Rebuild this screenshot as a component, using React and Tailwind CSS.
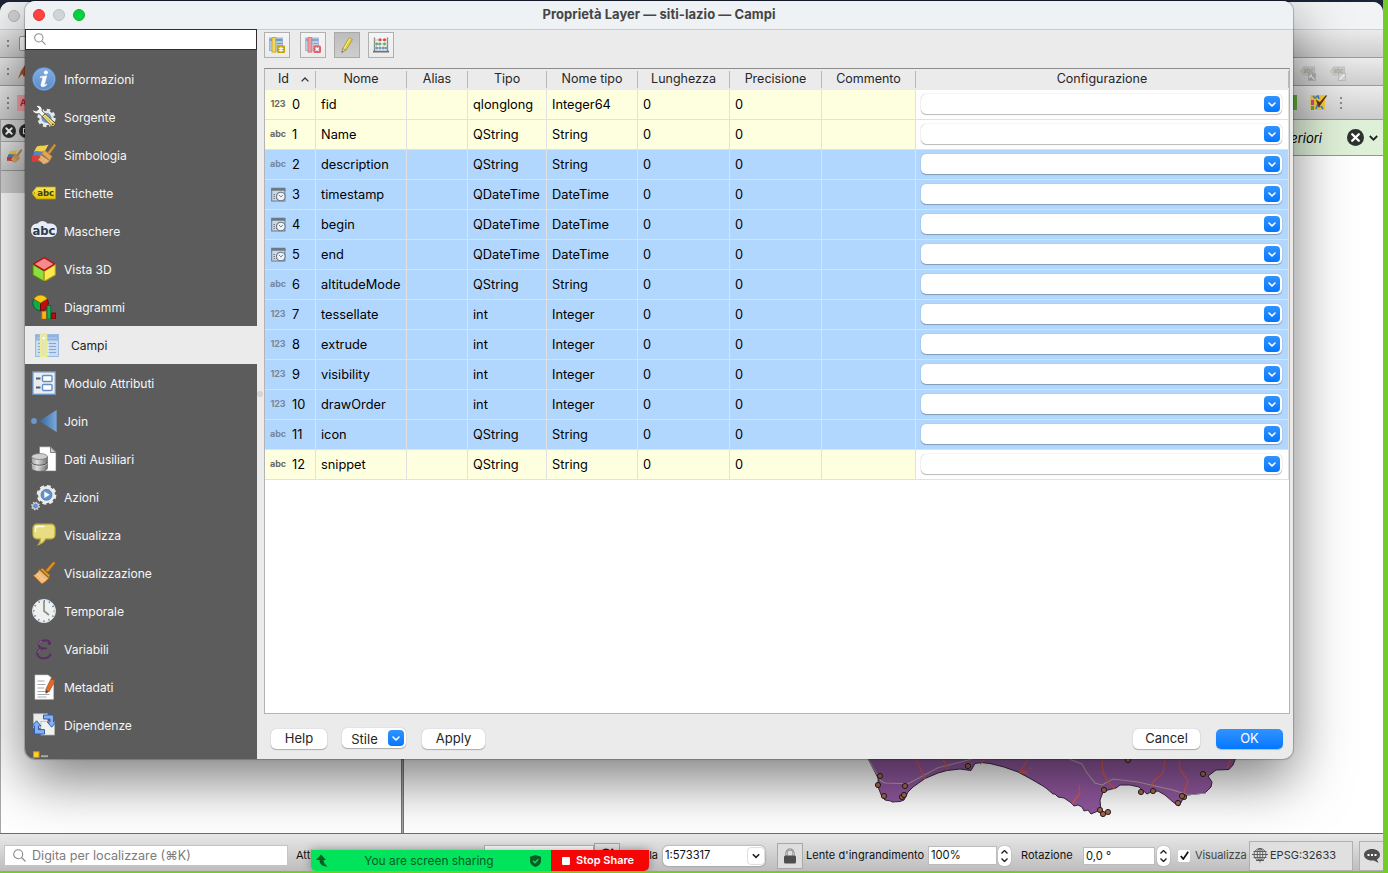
import React from 'react';

/* ---------- sidebar icons (24 x 24) ---------- */

const Svg = ({ s = 24, vb = '0 0 24 24', className = '', children }) => (
  <svg width={s} height={s} viewBox={vb} className={'shrink-0 ' + className} fill="none">
    {children}
  </svg>
);

const InfoIcon = () => (
  <Svg>
    <defs>
      <linearGradient id="inf" x1="0" y1="0" x2="0" y2="1">
        <stop offset="0" stopColor="#83ace0" />
        <stop offset="1" stopColor="#5b8ecb" />
      </linearGradient>
    </defs>
    <circle cx="12" cy="12" r="11.700" fill="#5f92cf" />
    <circle cx="12" cy="12" r="10.600" fill="url(#inf)" stroke="#8fb5e5" strokeWidth=".6" />
    <circle cx="13.900" cy="5.500" r="2" fill="#fff" />
    <path d="M8.300 9.700l6.500-.9-2.300 8.500c-.2.900.5.8 1.800-.3l.6.600c-2 2.700-6.800 3.300-5.800-.4l1.500-5.600c.2-.9-.2-1-2.500-1z" fill="#fff" stroke="#fff" strokeWidth=".5" />
  </Svg>
);

const WrenchGearIcon = () => (
  <Svg>
    <circle cx="14.500" cy="13" r="7.600" stroke="#e6e8ea" strokeWidth="3.200" strokeDasharray="3.400 2.570" />
    <circle cx="14.500" cy="13" r="6.200" fill="#6a9bd1" stroke="#e6e8ea" strokeWidth="2.200" />
    <path d="M3.800.8C7.500-.6 11 2 10 6l4.600 4-3 3.200L7.300 8.600C4 9.600 1 8 .2 4.600l4 1.400L6.800 4z" fill="#f4f4f4" stroke="#4a4a4a" strokeWidth=".8" />
    <path d="M10.200 11.500l3-2.700 10 9.400c.6 1.200-1.600 4-3 3.600z" fill="#f3df7e" stroke="#4f4526" strokeWidth=".9" />
    <path d="M12.800 11.300l8 8" stroke="#b79a35" strokeWidth=".8" />
    <circle cx="20.800" cy="19.500" r=".9" fill="#4f4526" />
  </Svg>
);

const SymbologyIcon = ({ s = 24 }) => (
  <Svg s={s}>
    <path d="M4.500 4c3-2.500 6-.2 12-2.500l-4.500 8.500-10-1z" fill="#f0d34b" />
    <path d="M2.500 8.500c3-1.500 6 1 9-.5l-2 6.500-9-1z" fill="#5585c8" />
    <path d="M0 12.800c3-1.500 7 1 10-.5l4 6.200c-4 2.500-9-1-14 .5z" fill="#dd3d3a" />
    <path d="M15.500 9.500L22.300.8l1.900 1.500-6.500 9z" fill="#d49441" stroke="#9c6320" strokeWidth=".6" />
    <path d="M9.500 10.500l3.500-3 7.200 6-2.500 4z" fill="#e0a458" stroke="#b07a38" strokeWidth=".6" />
    <path d="M8.500 11.500l9.200 6.300c-1.500 2.200-4.700 3.500-6.700 3.200-1-2-3.500-3.500-5-4 1.600-1.300 2.200-3 2.500-5.500z" fill="#e4b678" stroke="#b07a38" strokeWidth=".6" />
    <path d="M10 14l-2 3.200M12.500 15.800l-2 3.200M14.800 17.200l-1.500 2.600" stroke="#d09c5c" strokeWidth=".6" />
  </Svg>
);

const LabelIcon = () => (
  <Svg>
    <defs>
      <linearGradient id="lab" x1="0" y1="0" x2="0" y2="1">
        <stop offset="0" stopColor="#f9e85c" />
        <stop offset="1" stopColor="#e3c400" />
      </linearGradient>
    </defs>
    <path d="M4.500 6h19v12h-19L.4 12.800v-1.600z" fill="url(#lab)" stroke="#b59a12" strokeWidth=".8" />
    <circle cx="2.500" cy="12" r=".7" fill="#8a7510" />
    <text x="13.600" y="15" textAnchor="middle" fontSize="8.600" fontWeight="700" fill="#3b3a10" fontFamily="'DejaVu Sans'">abc</text>
  </Svg>
);

const MaskIcon = () => (
  <svg width="28" height="24" viewBox="0 0 28 24" className="-mx-[2px] shrink-0">
    <path d="M7 10.500h14M7 12h14M12.500 8v4" stroke="#e6ecfa" strokeWidth="12" strokeLinecap="round" strokeLinejoin="round" />
    <text x="14" y="15.600" textAnchor="middle" fontSize="11.600" fontWeight="700" fill="#2f3a48" fontFamily="'DejaVu Sans'">abc</text>
  </svg>
);

const CubeIcon = () => (
  <Svg>
    <path d="M1 7.500L12.200 14v10.400L1 18z" fill="#8fdf3c" stroke="#4d8f12" strokeWidth="1.100" />
    <path d="M23.300 7.500L12.200 14v10.400l11.100-6.400z" fill="#fce94f" stroke="#b39a10" strokeWidth="1.100" />
    <path d="M12.200.6L22.500 7 12.200 13.400 1.700 7z" fill="#f58b8b" stroke="#b40f10" strokeWidth="1.300" />
  </Svg>
);

const DiagramIcon = () => (
  <Svg>
    <path d="M8.500 8V15.800A7.800 7.800 0 0 1 1.800 4z" fill="#12a84c" stroke="#0a4f24" strokeWidth=".8" />
    <path d="M8.500 8L15.300 4A7.800 7.800 0 0 1 8.500 15.800z" fill="#c00d0d" stroke="#5f0606" strokeWidth=".8" />
    <path d="M8.500 8L1.800 4A7.800 7.800 0 0 1 15.300 4z" fill="#fbc913" stroke="#8f6b06" strokeWidth=".8" />
    <rect x="10" y="16.500" width="4.200" height="7.500" fill="#fcb713" stroke="#d97f10" strokeWidth=".8" />
    <rect x="15" y="10.500" width="3.800" height="13.500" fill="#12b056" stroke="#0a5f2c" strokeWidth=".8" />
    <rect x="19.800" y="18" width="3.700" height="6" fill="#c00d0d" stroke="#5f0606" strokeWidth=".8" />
  </Svg>
);

const FieldsIcon = () => (
  <Svg>
    <rect x=".5" y="1.500" width="23" height="22" fill="#c9dcf2" stroke="#9dbbe0" />
    <rect x="1" y="2" width="22" height="5.500" fill="#8fb3df" />
    <path d="M2 5h20" stroke="#b7d0ee" />
    <path d="M3 10.500h18M3 13.500h18M3 16.500h18M3 19.500h18" stroke="#82a8d6" strokeWidth="1" />
    <path d="M13 9.500v13" stroke="#e8f0fa" strokeWidth="1.400" />
    <rect x="5.500" y=".6" width="6.200" height="23" fill="#e2e6b8" stroke="#eef08a" strokeWidth="1.200" />
    <circle cx="8.600" cy="5" r="1.200" fill="#fff" />
  </Svg>
);

const FormIcon = () => (
  <Svg>
    <rect x=".9" y=".9" width="22.400" height="22.400" fill="#ececec" stroke="#6e97c8" strokeWidth="1.300" />
    <path d="M4 7.500h4.500M4 16.500h4.500" stroke="#44607f" strokeWidth="2" />
    <rect x="10.500" y="4.500" width="9.500" height="6" rx="1" fill="#fff" stroke="#6391c6" strokeWidth="1.400" />
    <rect x="10.500" y="13.500" width="9.500" height="6" rx="1" fill="#fff" stroke="#6391c6" strokeWidth="1.400" />
  </Svg>
);

const JoinIcon = () => (
  <Svg className="overflow-visible">
    <defs>
      <linearGradient id="joi">
        <stop offset="0" stopColor="#34669b" />
        <stop offset="1" stopColor="#79a8dc" />
      </linearGradient>
    </defs>
    <circle cx="2" cy="12" r="2.900" fill="#6a99cf" />
    <path d="M7 12L24.600 1v22z" fill="url(#joi)" />
  </Svg>
);

const AuxIcon = () => (
  <Svg className="overflow-visible">
    <defs>
      <linearGradient id="aux">
        <stop offset="0" stopColor="#9b9b9b" />
        <stop offset=".35" stopColor="#dedede" />
        <stop offset="1" stopColor="#717171" />
      </linearGradient>
    </defs>
    <path d="M7.500-.2h11l5.500 5.200v19h-16.500z" fill="#fff" stroke="#7a7a7a" strokeWidth=".6" />
    <path d="M18.500 0v5.500h5.500z" fill="#d0d0d0" stroke="#666" strokeWidth=".8" />
    <path d="M-.5 9.500v11.800c0 4 15.900 4 15.900 0V9.500z" fill="url(#aux)" stroke="#5c5c5c" strokeWidth=".7" />
    <ellipse cx="7.500" cy="9.500" rx="7.900" ry="3" fill="#cfcfcf" stroke="#6e6e6e" strokeWidth=".7" />
    <path d="M-.4 15.200c0 4 15.800 4 15.800 0" stroke="#4e4e4e" strokeWidth="1" />
    <path d="M-.4 16.200c0 4 15.800 4 15.800 0" stroke="#ddd" strokeWidth=".6" />
  </Svg>
);

const ActionIcon = () => (
  <Svg className="overflow-visible">
    <circle cx="14.500" cy="9.800" r="8.500" stroke="#ececec" strokeWidth="2.800" strokeDasharray="3.900 2.775" />
    <circle cx="14.500" cy="9.800" r="7" fill="#5f93cf" stroke="#ececec" strokeWidth="3" />
    <circle cx="14.500" cy="9.800" r="5.500" stroke="#3c5f88" strokeWidth=".6" />
    <path d="M12.300 6.600v6.400l5.500-3.200z" fill="#fff" />
    <circle cx="3.500" cy="21" r="3.600" stroke="#e0e0e0" strokeWidth="1.500" strokeDasharray="1.500 1.300" />
    <circle cx="3.500" cy="21" r="2.900" fill="#5f93cf" stroke="#d5d5d5" strokeWidth="1" />
  </Svg>
);

const BubbleIcon = () => (
  <Svg>
    <path d="M5 1.200h14a4 4 0 0 1 4 4v6.600a4 4 0 0 1-4 4h-5.500C12.500 18.500 10 20.500 6.500 21.600c1.600-1.800 2-3.500 2-5.800H5a4 4 0 0 1-4-4V5.200a4 4 0 0 1 4-4z" fill="#e8dd82" stroke="#c2b03e" strokeWidth="1.200" />
    <path d="M3.500 8.500V6c0-1.500 1-2.500 2.500-2.500h6" stroke="#fff" strokeWidth="1.500" strokeLinecap="round" opacity=".85" />
  </Svg>
);

const BrushIcon = () => (
  <Svg>
    <path d="M13.500 9.200L21.200.9c1.200-.7 2.500.6 1.800 1.700l-7 8.600z" fill="#dd9230" stroke="#a0620f" strokeWidth=".8" />
    <path d="M8.200 8.200l2.300-1 7.500 7-.8 2.600z" fill="#e19a37" stroke="#9a5c0d" strokeWidth=".8" />
    <path d="M7.500 8.800l9.200 8.400c-1.500 2-3.700 4-7 5.600L1.500 14.500c2.500-1.200 4.500-3 6-5.700z" fill="#ecb878" stroke="#b87424" strokeWidth=".9" />
    <path d="M7 11.500l-3.500 4M9.300 13.300L5.800 17.500M11.500 15.200L8 19.500M13.800 17L10 21.300M5 12.500l7.500 7.500" stroke="#f7dcb5" strokeWidth=".6" />
  </Svg>
);

const ClockIcon = () => (
  <Svg>
    <circle cx="12" cy="12" r="11.500" fill="#f0f0ee" stroke="#dedede" strokeWidth="1" />
    <circle cx="12" cy="12" r="10.200" stroke="#4d80b8" strokeWidth="1.700" strokeDasharray="1.200 4.140" strokeDashoffset=".6" />
    <path d="M12 2v10l5 4" stroke="#8b8f8b" strokeWidth="1.700" fill="none" />
  </Svg>
);

const EpsilonIcon = () => (
  <Svg>
    <path d="M18 6.800C17.800 3.500 14.500 3 12.200 3.400 8.500 4 6.500 6 6.800 8.300c.3 2 2.600 3 5.200 3-4 .2-7 2.200-6.800 5.500.2 3.500 4 5 7.800 4.400 3-.4 5-2.200 5.800-4.600" stroke="#5b2d66" strokeWidth="2" />
    <circle cx="17.300" cy="6.500" r="1.500" fill="#5b2d66" />
    <path d="M11.500 11.400h3.500" stroke="#5b2d66" strokeWidth="1.800" />
    <path d="M7 7.500C7 5.800 8.500 4.500 10 4.200M6 15.500c.3-1.500 1.300-2.500 2.500-3" stroke="#a583ad" strokeWidth=".9" />
  </Svg>
);

const MetadataIcon = () => (
  <Svg className="overflow-visible">
    <path d="M3 0h13l5.500 4.500V24.300H3z" fill="#fff" stroke="#cfcfcf" strokeWidth=".6" />
    <path d="M5.500 6h7M5.500 9.500h8M5.500 13h6.500M5.500 16.500h12M5.500 19.500h12M5.500 22h9" stroke="#a9a9a9" strokeWidth="1" />
    <path d="M19.500 2.800l4.300 2-6.500 11.400-3.300 2-.1-4.200z" fill="#e06a26" stroke="#9c4310" strokeWidth=".6" />
    <path d="M19.200 3.600l4 1.900" stroke="#5a5a5a" strokeWidth="1.200" />
    <path d="M13.800 14.800l2.800 1.600-2.900 2z" fill="#4b4b4b" />
  </Svg>
);

const DependIcon = () => (
  <Svg>
    <rect x="1.500" y=".8" width="14" height="14" fill="#e9ece8" stroke="#b4b8b2" strokeWidth=".7" />
    <rect x="9" y="8.500" width="13.500" height="13.500" fill="#f0f2ef" stroke="#b4b8b2" strokeWidth=".7" />
    <path d="M11.500 2h10v7h2.600l-4.400 5.200L15.200 9h2.700V6h-6.400z" fill="#84aef0" stroke="#2f5fb0" strokeWidth="1" />
    <path d="M12.500 21h-10v-8H0l4.600-5.200L9 13H6.500v3.600h6z" fill="#84aef0" stroke="#2f5fb0" strokeWidth="1" />
  </Svg>
);

const LegendIcon = () => (
  <Svg className="overflow-visible">
    <rect x="1.500" y=".8" width="5.500" height="5.500" fill="#ffd42a" stroke="#e08f10" />
    <rect x="9" y="4.200" width="7" height="2" fill="#a9a9a9" />
  </Svg>
);

const NAV = [
  ['Informazioni', InfoIcon],
  ['Sorgente', WrenchGearIcon],
  ['Simbologia', SymbologyIcon],
  ['Etichette', LabelIcon],
  ['Maschere', MaskIcon],
  ['Vista 3D', CubeIcon],
  ['Diagrammi', DiagramIcon],
  ['Campi', FieldsIcon],
  ['Modulo Attributi', FormIcon],
  ['Join', JoinIcon],
  ['Dati Ausiliari', AuxIcon],
  ['Azioni', ActionIcon],
  ['Visualizza', BubbleIcon],
  ['Visualizzazione', BrushIcon],
  ['Temporale', ClockIcon],
  ['Variabili', EpsilonIcon],
  ['Metadati', MetadataIcon],
  ['Dipendenze', DependIcon],
  ['Legenda', LegendIcon],
];

/* ---------- shared pieces ---------- */

const Magnifier = ({ s = 13 }) => (
  <svg width={s} height={s} viewBox="0 0 13 13" fill="none" stroke="#8a8a8a" strokeWidth="1.100" className="shrink-0">
    <circle cx="5.200" cy="5.200" r="4.500" />
    <path d="M8.500 8.500l4 4" />
  </svg>
);

const BlueChevron = () => (
  <span className="flex h-4 w-4 shrink-0 items-center justify-center rounded-[4px] bg-linear-to-b from-[#2f93ff] to-[#0077ff]">
    <svg width="8" height="5" viewBox="0 0 8 5" fill="none" stroke="#fff" strokeWidth="1.600" strokeLinecap="round" strokeLinejoin="round">
      <path d="M1 1l3 3 3-3" />
    </svg>
  </span>
);

const Grip = ({ n = 3, className = '' }) => (
  <span className={'flex shrink-0 flex-col gap-[3px] ' + className}>
    {Array.from({ length: n }, (_, i) => (
      <span key={i} className="h-[2px] w-[2px] bg-[#8a8a8a]" />
    ))}
  </span>
);

const RoundX = ({ s }) => (
  <svg width={s} height={s} viewBox="0 0 16 16" className="shrink-0">
    <circle cx="8" cy="8" r="8" fill="#2e3331" />
    <path d="M4.900 4.900l6.200 6.200M11.100 4.900l-6.200 6.200" stroke="#fff" strokeWidth="2.200" strokeLinecap="round" />
  </svg>
);

/* ---------- fields table ---------- */

const ROWS = [
  ['123', '0', 'fid', 'qlonglong', 'Integer64', false],
  ['abc', '1', 'Name', 'QString', 'String', false],
  ['abc', '2', 'description', 'QString', 'String', true],
  ['date', '3', 'timestamp', 'QDateTime', 'DateTime', true],
  ['date', '4', 'begin', 'QDateTime', 'DateTime', true],
  ['date', '5', 'end', 'QDateTime', 'DateTime', true],
  ['abc', '6', 'altitudeMode', 'QString', 'String', true],
  ['123', '7', 'tessellate', 'int', 'Integer', true],
  ['123', '8', 'extrude', 'int', 'Integer', true],
  ['123', '9', 'visibility', 'int', 'Integer', true],
  ['123', '10', 'drawOrder', 'int', 'Integer', true],
  ['abc', '11', 'icon', 'QString', 'String', true],
  ['abc', '12', 'snippet', 'QString', 'String', false],
];

const GRID = 'grid grid-cols-[51px_91px_61px_79px_91px_92px_92px_94px_373px]';

const DateIcon = () => (
  <svg width="15" height="15" viewBox="0 0 15 15" fill="none" className="-mt-px shrink-0">
    <rect x=".7" y="2" width="13.200" height="12" fill="#c9d8ea" stroke="#6d7885" strokeWidth="1" />
    <path d="M.2 2.200h14.200" stroke="#6d7885" strokeWidth="3" />
    <path d="M2.500 7.500h1.500M2.500 9.500h1.500M2.500 11.500h1.500M5 9.500h1M5 11.500h1" stroke="#6d7885" strokeWidth="1" />
    <circle cx="9.800" cy="9.500" r="4.300" fill="#eef3f8" stroke="#6d7885" strokeWidth="1.100" />
    <path d="M8 8l1.800 1.800L11.800 8.300" stroke="#6d7885" strokeWidth="1" />
  </svg>
);

const TypeGlyph = ({ kind, selected }) => {
  if (kind === 'date') return <DateIcon />;
  const color = selected ? 'text-[#77879b]' : 'text-[#6a6a64]';
  return (
    <span className={'-ml-px w-[16px] pb-px text-center text-[9px] leading-[14px] font-bold tracking-[-0.1px] ' + color}>{kind}</span>
  );
};

const HEADERS = ['Nome', 'Alias', 'Tipo', 'Nome tipo', 'Lunghezza', 'Precisione', 'Commento'];

const HeadCell = ({ children, className = '' }) => (
  <div className={'flex h-[21px] justify-end ' + className}>
    <div className="flex flex-1 justify-center pt-[1px] text-[12.5px] leading-[17px]">{children}</div>
    <span className="mt-[2px] h-[17px] w-px bg-[#b9b9b9]" />
  </div>
);

const FieldsTable = () => (
  <div className="flex h-[646px] w-[1026px] flex-col border border-[#b4b4b4] border-t-[#8c8c8c] bg-white">
    <div className={GRID + ' h-[21px] bg-[#ebebeb] text-[#262626]'}>
      <HeadCell>
        <span className="pl-[7px]">Id</span>
        <svg width="8" height="5" viewBox="0 0 8 5" fill="none" stroke="#333" strokeWidth="1.300" className="mt-[7px] ml-[12px]">
          <path d="M.6 4.400L4 1l3.400 3.400" />
        </svg>
      </HeadCell>
      {HEADERS.map((h) => (
        <HeadCell key={h}>{h}</HeadCell>
      ))}
      <HeadCell>Configurazione</HeadCell>
    </div>
    {ROWS.map(([kind, id, name, type, typeName, sel]) => {
      const bg = sel ? 'bg-[#b2d7ff]' : 'bg-[#feffdf]';
      const base = 'flex h-[30px] items-center border-r border-b border-[#e1e1e1] whitespace-nowrap ' + bg;
      const cell = base + ' pl-[5px] leading-[19px]';
      return (
        <div key={id} className={GRID + ' text-[12.800px] text-black'}>
          <div className={base + ' gap-[6px] pl-[6px]'}>
            <TypeGlyph kind={kind} selected={sel} />
            <span className="leading-[19px]">{id}</span>
          </div>
          <div className={cell}>{name}</div>
          <div className={cell} />
          <div className={cell}>{type}</div>
          <div className={cell}>{typeName}</div>
          <div className={cell}>0</div>
          <div className={cell}>0</div>
          <div className={cell} />
          <div className={'flex h-[30px] items-center border-r border-b border-[#e1e1e1] pl-[5px] ' + (sel ? 'bg-[#b2d7ff]' : 'bg-white')}>
            <div className="mt-[-1px] flex h-5 w-[361px] items-center justify-end rounded-[5px] bg-white pr-[2px] shadow-[0_1px_1px_rgba(0,0,0,0.25),0_0_1px_rgba(0,0,0,0.35)]">
              <BlueChevron />
            </div>
          </div>
        </div>
      );
    })}
  </div>
);

/* ---------- dialog ---------- */

const ToolButton = ({ active, className = '', children }) => (
  <div
    className={
      'flex h-[26px] w-[26px] items-center justify-center border ' +
      (active ? 'border-[#a9a9a9] bg-linear-to-b from-[#bdbdbd] to-[#cecece] ' : 'border-[#b0b0b0] bg-linear-to-b from-[#f5f5f5] to-[#ebebeb] ') +
      className
    }
  >
    {children}
  </div>
);

const AddField = () => (
  <Svg s={16} vb="0 0 16 16">
    <rect x=".5" y="1" width="13" height="12.500" fill="#b5cce8" stroke="#8aa9cf" strokeWidth=".8" />
    <path d="M1 3h12" stroke="#6f98c8" strokeWidth="2.200" />
    <path d="M8 6.500h5M8 9h5M8 11.500h5" stroke="#6f98c8" />
    <rect x="3" y=".6" width="3.800" height="14.500" fill="#efd768" stroke="#c9a71a" strokeWidth=".9" />
    <rect x="8" y="8.500" width="8" height="7.500" rx="1" fill="#c9a300" />
    <path d="M12 9.700v5M9.800 10.900l4.400 2.600M14.200 10.900l-4.400 2.600" stroke="#fff" strokeWidth="1.200" />
  </Svg>
);

const DelField = () => (
  <Svg s={16} vb="0 0 16 16" className="opacity-85">
    <rect x=".5" y="1" width="13" height="12.500" fill="#b5cce8" stroke="#8aa9cf" strokeWidth=".8" />
    <path d="M1 3h12" stroke="#6f98c8" strokeWidth="2.200" />
    <path d="M8 6.500h5M8 9h5M8 11.500h5" stroke="#6f98c8" />
    <rect x="3" y=".6" width="3.800" height="14.500" fill="#eb8e8e" stroke="#d95f62" strokeWidth=".9" />
    <rect x="8.500" y="8.500" width="7.500" height="7.500" rx="1.500" fill="#dd4a50" />
    <path d="M10.600 10.600l3.200 3.200M13.800 10.600l-3.200 3.200" stroke="#fff" strokeWidth="1.500" />
  </Svg>
);

const PencilIcon = () => (
  <Svg s={16} vb="0 0 16 16">
    <path d="M10.200.9l3.300 1.600-6.700 10.800-3.200-1.700z" fill="#e6d03a" stroke="#a8962a" strokeWidth=".8" />
    <path d="M11 1.500L4.800 12" stroke="#f8f0a0" strokeWidth="1" />
    <path d="M3.600 11.600l3.200 1.700-4.100 2.300z" fill="#ddd0a0" stroke="#8a8060" strokeWidth=".6" />
    <path d="M2.700 15.600l.5-1.900 1.100.7z" fill="#555" />
  </Svg>
);

const AbacusIcon = () => (
  <Svg s={16} vb="0 0 16 16">
    <path d="M1.500.5v14M14.500.5v14" stroke="#858585" strokeWidth="1.300" />
    <path d="M1 3h14M1 7h14M1 11h14" stroke="#b5b5b5" strokeWidth=".8" />
    <path d="M0 14.700h16" stroke="#707070" strokeWidth="1.800" />
    <g fill="#e04545">
      <circle cx="7" cy="2.800" r="1.500" />
      <circle cx="11.500" cy="2.800" r="1.500" />
    </g>
    <g fill="#5fae62">
      <circle cx="3.700" cy="7" r="1.400" />
      <circle cx="6.700" cy="7" r="1.400" />
      <circle cx="11.500" cy="7" r="1.400" />
    </g>
    <g fill="#6f9ac6">
      <circle cx="3.700" cy="11" r="1.500" />
      <circle cx="7" cy="11" r="1.500" />
      <circle cx="10.300" cy="11" r="1.500" />
      <circle cx="13" cy="11" r="1.300" />
    </g>
  </Svg>
);

const PushButton = ({ children, className = '' }) => (
  <div
    className={
      'flex h-5 items-center justify-center rounded-[5px] bg-white text-[13px] text-[#262626] shadow-[0_1px_1px_rgba(0,0,0,0.25),0_0_1px_rgba(0,0,0,0.3)] ' +
      className
    }
  >
    {children}
  </div>
);

const Dialog = () => (
  <div className="absolute top-px left-[25px] flex h-[758px] w-[1268px] flex-col overflow-hidden rounded-[10px] bg-[#ebebeb] shadow-[0_0_1px_1px_rgba(0,0,0,0.22),0_20px_56px_rgba(0,0,0,0.52)]">
    <div className="grid h-[29px] shrink-0 grid-cols-[100px_1fr_100px] items-center border-b border-[#c9cccd] bg-[#eef2f5]">
      <div className="flex gap-2 pl-2">
        <span className="h-3 w-3 rounded-full border border-[#e3302c] bg-[#ff4244]" />
        <span className="h-3 w-3 rounded-full border border-[#bbbdbf] bg-[#d2d5d7]" />
        <span className="h-3 w-3 rounded-full border border-[#07b82f] bg-[#06d03e]" />
      </div>
      <div className="text-center text-[13px] font-bold tracking-[0.05px] text-[#454545]">Proprietà Layer — siti-lazio — Campi</div>
    </div>
    <div className="flex min-h-0 flex-1">
      <div className="-mt-px flex w-[232px] shrink-0 flex-col overflow-hidden bg-[#5c5c5c]">
        <div className="flex h-[21px] shrink-0 items-center border border-[#2e2e2e] bg-white pb-px pl-2">
          <Magnifier s={12} />
        </div>
        <div className="flex flex-col pt-[10px]">
          {NAV.map(([label, Icon]) => {
            const on = label === 'Campi';
            return (
              <div
                key={label}
                className={
                  'flex h-[38px] shrink-0 items-center text-[12.100px] tracking-[-0.060px] ' +
                  (on ? 'gap-3 bg-[#ebebeb] pl-[10px] text-[#1d1d1d]' : 'gap-2 pl-[7px] text-[#f6f6f6]')
                }
              >
                <Icon />
                <span className="pt-[2px]">{label}</span>
              </div>
            );
          })}
        </div>
      </div>
      <div className="flex w-[7px] shrink-0 items-center pb-[2px]">
        <span className="h-[6px] w-[6px] rounded-full bg-[#d4d4d4]" />
      </div>
      <div className="flex flex-1 flex-col">
        <div className="flex pt-[2px] pb-[10px]">
          <ToolButton className="mr-[10px]">
            <AddField />
          </ToolButton>
          <ToolButton className="mr-2">
            <DelField />
          </ToolButton>
          <ToolButton active className="mr-2">
            <PencilIcon />
          </ToolButton>
          <ToolButton>
            <AbacusIcon />
          </ToolButton>
        </div>
        <FieldsTable />
        <div className="flex items-start pt-[15px] pr-[10px] pl-[7px]">
          <PushButton className="w-[56px]">Help</PushButton>
          <PushButton className="-mt-px ml-[15px] w-[64px] gap-[10px] pl-[7px]">
            <span className="pt-[3px]">Stile</span>
            <BlueChevron />
          </PushButton>
          <PushButton className="ml-4 w-[63px]">Apply</PushButton>
          <span className="flex-1" />
          <PushButton className="w-[67px]">Cancel</PushButton>
          <div className="ml-4 flex h-5 w-[67px] items-center justify-center rounded-[5px] bg-linear-to-b from-[#2f93ff] to-[#0077ff] text-[13px] text-white shadow-[0_1px_1px_rgba(0,0,0,0.2)]">
            OK
          </div>
        </div>
      </div>
    </div>
  </div>
);

/* ---------- main window behind the dialog ---------- */

const DOTS = [
  [880, 776], [878, 785], [884, 796], [905, 786], [902, 797], [904, 795], [968, 766],
  [1128, 760], [1203, 774], [1104, 790], [1141, 792], [1153, 791], [1184, 797], [1182, 796],
  [1178, 803], [1100, 810], [1103, 814], [1108, 812],
];

const MapCanvas = () => (
  <svg width="400" height="83" viewBox="860 750 400 83" className="shrink-0" fill="none">
    <path
      d="M863 750L868.500 759.500 878 778 878.500 788 882 797 885 800 891 801 892 802 900 801.500 904 800 908 792 913 787 925 778.500 938 773 947 770.500 960 769 971 770.500 975 763.500 981 762.500 990 763.500 1004 767 1018 772 1031 779 1043 786 1046 788 1053 794 1055 794 1058 797 1064 798 1070 802 1074 806 1078 805 1082 807 1084 811 1088 810 1091 814 1098 811 1101 811 1100 800 1103 792 1108 790 1116 788 1120 785 1130 785 1139 787 1147 794 1151 792 1158 791 1165 795 1173 802 1179 806 1183 799 1187 795 1205 793 1211 787 1212 782 1208 776 1216 770 1229 769.500 1233 765 1236 757 1236 750z"
      fill="#9259a0"
      stroke="#3a2840"
      strokeWidth="1"
    />
    <path d="M868 759l13 22 4 2 23 .7 30-16 24-6 14-4M1069 759l13 5 5 9 8 10 7 2 11-6 25 3 35 8 15 5 18-2" stroke="#b3a3a8" strokeWidth="1.100" />
    <path d="M916 759l9 20M943 759l5 11M1028 759l-8 13 8 1M1022 770l5 2M1102 759l1 14 6 10 6 6M1165 759l-2 14-9 8-3 7M1179 759l1 10 8 12-5 14M1231 759l-4 9M1079 785l1 8-8 11M985 759l-5 5M1029 768h3" stroke="#dd5a50" strokeWidth="1.300" />
    {DOTS.map(([x, y], i) => (
      <circle key={i} cx={x} cy={y} r="2.600" fill="#a5694c" stroke="#2b1f24" strokeWidth="1" />
    ))}
  </svg>
);

const GhostLabel = ({ pencil }) => (
  <svg width="16" height="15" viewBox="0 0 16 15" fill="none" className="opacity-70">
    <path d="M3.500 1h11v8h-11L.5 5.500z" fill="#c9c8c0" stroke="#a9a9a2" strokeWidth=".7" />
    <text x="8.500" y="6.800" textAnchor="middle" fontSize="5.500" fontWeight="700" fill="#8f8f8a" fontFamily="Inter">abc</text>
    <rect x="8.500" y="7.500" width="7" height="7" fill={pencil ? '#cfcfcc' : '#8e9a9a'} stroke="#a0a0a0" strokeWidth=".6" />
    {pencil ? <path d="M14.500 8.500l-5 5" stroke="#fff" strokeWidth="1.500" /> : <path d="M10 9l4.500 4.500M10 12a2 2 0 0 1 2-3" stroke="#eee" strokeWidth="1.200" />}
  </svg>
);

const bar = 'flex shrink-0 items-center border-b border-[#9b9b9b] bg-linear-to-b from-[#ebebeb] to-[#cdcdcd] ';

const Spinner = () => (
  <span className="flex h-5 w-[13px] shrink-0 flex-col items-center justify-between rounded-[5px] bg-white py-[4px] shadow-[0_0_1px_rgba(0,0,0,0.5)]">
    <svg width="7" height="4" viewBox="0 0 7 4" fill="none" stroke="#222" strokeWidth="1.400">
      <path d="M.5 3.500l3-3 3 3" />
    </svg>
    <svg width="7" height="4" viewBox="0 0 7 4" fill="none" stroke="#222" strokeWidth="1.400">
      <path d="M.5.500l3 3 3-3" />
    </svg>
  </span>
);

const StatusBar = () => (
  <div className="flex h-[38px] shrink-0 items-center border-t border-[#6d6d6d] bg-linear-to-b from-[#e9e9e9] to-[#bdbdbd] pt-[6px] text-[11px] whitespace-nowrap text-[#111]">
    <div className="ml-1 flex h-[21px] w-[284px] shrink-0 items-center gap-[6px] border border-[#c4c4c4] bg-white pl-[8px] text-[12.600px] text-[#7c7c7c]">
      <Magnifier />
      <span className="pt-px">Digita per localizzare (⌘K)</span>
    </div>
    <span className="ml-2 w-[188px] shrink-0">Attiva</span>
    <span className="h-[21px] w-[110px] shrink-0 border border-[#b5b5b5] bg-white" />
    <span className="flex h-[26px] w-[26px] shrink-0 items-start justify-center border border-[#a5a5a5] bg-[#e3e3e3] pt-1">
      <svg width="16" height="16" viewBox="0 0 16 16" fill="none" stroke="#222" strokeWidth="2">
        <circle cx="7" cy="6" r="4.500" />
        <path d="M12 3l2-2M10 4l3 4" />
      </svg>
    </span>
    <span className="flex w-[38px] shrink-0 justify-end">Scala</span>
    <span className="ml-[5px] flex h-5 w-[102px] shrink-0 items-center justify-between rounded-[5px] bg-white pl-[2px] shadow-[0_0_2px_rgba(0,0,0,0.45)]">
      <span className="pb-px text-[11.200px]">1:573317</span>
      <span className="flex h-[18px] w-[18px] items-center justify-center rounded-[4px] border border-[#e0e0e0]">
        <svg width="8" height="6" viewBox="0 0 8 6" fill="none" stroke="#222" strokeWidth="1.600">
          <path d="M.8 1.200L4 4.400l3.200-3.200" />
        </svg>
      </span>
    </span>
    <span className="ml-3 flex h-[26px] w-[26px] shrink-0 items-center justify-center border border-[#a9a9a9] bg-[#dedede]">
      <svg width="14" height="16" viewBox="0 0 14 16" fill="none">
        <path d="M3.500 8V5a3.500 3.500 0 0 1 7 0v3" stroke="#777" strokeWidth="2" />
        <path d="M3.500 8V5a3.500 3.500 0 0 1 7 0v3" stroke="#ddd" strokeWidth=".7" />
        <rect x="1" y="7.500" width="12" height="8" rx="1.500" fill="#4e4e4e" />
      </svg>
    </span>
    <span className="ml-[3px] w-[122px] shrink-0 text-[11px] tracking-[0.060px]">Lente d&apos;ingrandimento</span>
    <span className="flex h-[19px] w-[69px] shrink-0 items-center border border-[#bcbcbc] bg-white pl-[2px] text-[11.200px]">100%</span>
    <span className="w-px shrink-0" />
    <Spinner />
    <span className="ml-[10px] w-[62px] shrink-0 text-[11px]">Rotazione</span>
    <span className="flex h-[18px] w-[72px] shrink-0 items-center border border-[#bcbcbc] bg-white pt-px pl-[2px] text-[11.200px]">0,0 °</span>
    <span className="w-[2px] shrink-0" />
    <Spinner />
    <span className="ml-2 flex h-3 w-3 shrink-0 items-center justify-center rounded-[2px] bg-white">
      <svg width="9" height="9" viewBox="0 0 9 9" fill="none" stroke="#111" strokeWidth="1.700">
        <path d="M.8 5l2.500 3L8.200.8" />
      </svg>
    </span>
    <span className="ml-[5px] w-[54px] shrink-0 text-[11px] tracking-[-0.08px] text-[#444]">Visualizza</span>
    <span className="flex h-[30px] w-[104px] shrink-0 items-center gap-[2px] border border-[#b0b0b0] bg-[#e0e0e0] pl-[2px] text-[11px] text-[#333]">
      <svg width="16" height="15" viewBox="0 0 16 15" fill="none" stroke="#555" strokeWidth=".9">
        <ellipse cx="8" cy="6.500" rx="6" ry="6" />
        <ellipse cx="8" cy="6.500" rx="2.800" ry="6" />
        <path d="M8 .5v14M0 6.500h16M1.500 3.500h13M1.500 9.500h13M4 12.500h8" />
      </svg>
      EPSG:32633
    </span>
    <span className="ml-[6px] flex h-[30px] w-[30px] shrink-0 items-center border border-[#b0b0b0] bg-[#e0e0e0] pl-1">
      <svg width="16" height="14" viewBox="0 0 16 14">
        <path d="M8 0c4.500 0 8 2.500 8 5.800 0 2-1.200 3.700-3 4.700l1.500 3.500-4.500-2.600C4 12.200 0 9.500 0 5.800 0 2.500 3.500 0 8 0z" fill="#4f4f4f" />
        <path d="M3.500 5h2v2h-2zM7 5h2v2H7zM10.500 5h2v2h-2z" fill="#fff" />
      </svg>
    </span>
  </div>
);

const MainWindow = () => (
  <div className="flex h-[869px] w-[1383px] flex-col overflow-hidden rounded-t-[10px] bg-[#ededed]">
    <div className="flex h-[28px] shrink-0 items-center border-b border-[#cfcfcf] bg-[#f1f3f4] pl-2">
      <span className="h-3 w-3 rounded-full border border-[#b9b9b9] bg-[#d4d4d4]" />
    </div>
    <div className={bar + 'h-[28px]'}>
      <Grip n={2} className="ml-[7px]" />
      <span className="ml-[10px] h-[15px] w-[12px] rounded-[2px] border border-[#999] bg-white" />
    </div>
    <div className={bar + 'h-[28px]'}>
      <Grip n={2} className="ml-[7px]" />
      <svg width="14" height="16" viewBox="0 0 14 16" className="ml-[8px]">
        <path d="M8 1l5 3-6 9-2-3-4 5 3-8z" fill="#a9552f" />
      </svg>
      <span className="ml-[1269px] flex gap-[14px] pt-[3px]">
        <GhostLabel />
        <GhostLabel pencil />
      </span>
    </div>
    <div className={bar + 'h-[34px]'}>
      <Grip className="ml-[7px]" />
      <span className="ml-[8px] flex h-[16px] w-[16px] items-center bg-[#f6a9ae] pl-[3px] text-[9px] font-bold text-[#d4202c]">A</span>
      <span className="ml-[1249px] flex h-[15px] w-[15px] items-center justify-end bg-[#5fae3c]">
        <span className="mr-1 h-2 w-2 rounded-full border border-white" />
      </span>
      <svg width="17" height="17" viewBox="0 0 17 17" className="ml-[13px]" fill="none">
        <rect x=".5" y="1" width="14.500" height="15" fill="#f4cf3c" />
        <path d="M3 2l2 2 3-2 1 3M6 15l1.500-4 2.500 2M11 12l2 3" stroke="#4a86c8" strokeWidth="1.700" />
        <path d="M1 6h3v5H1z" fill="#d9487c" />
        <path d="M1 12h3v4H1z" fill="#5fae3c" />
        <path d="M16.500 1.500L10 9l-3-2 2 5z" fill="#6b2f14" stroke="#6b2f14" strokeWidth="1.200" />
      </svg>
      <Grip className="ml-[13px]" />
    </div>
    <div className="flex min-h-0 flex-1">
      <div className="flex w-[401px] shrink-0 flex-col border-l border-[#a8a8a8] bg-white">
        <div className="flex h-[22px] shrink-0 items-center gap-[3px] border-b border-[#ababab] bg-[#dcdcdc] pl-px">
          <RoundX s={14} />
          <span className="flex h-[14px] w-[14px] shrink-0 items-center rounded-full bg-[#2e3331] pl-[4px]">
            <span className="h-[6px] w-[6px] border border-white" />
          </span>
        </div>
        <div className={bar + 'h-[29px] pl-[6px]'}>
          <SymbologyIcon s={15} />
        </div>
        <div className="h-[22px] shrink-0 bg-[#d3d3d3]" />
        <div className="flex-1 bg-white" />
      </div>
      <div className="w-[3px] shrink-0 border-x border-[#777] bg-[#a2a2a2]" />
      <div className="flex flex-1 flex-col bg-white">
        <div className="flex h-[36px] shrink-0 items-center justify-end border-b border-[#8f9a8c] bg-[#dff0d8] pr-[5px]">
          <span className="mr-[25px] pt-[2px] text-[13px] text-black italic">Campi ulteriori</span>
          <RoundX s={17} />
          <svg width="9" height="6" viewBox="0 0 9 6" fill="none" stroke="#222" strokeWidth="1.800" className="ml-[5px]">
            <path d="M.8 1l3.700 3.700L8.200 1" />
          </svg>
        </div>
        <div className="flex flex-1 items-end pl-[456px]">
          <MapCanvas />
        </div>
      </div>
    </div>
    <StatusBar />
  </div>
);

/* ---------- screen sharing strip ---------- */

const ShareStrip = () => (
  <div className="absolute top-[850px] left-[311px] flex h-[21px] w-[338px] overflow-hidden rounded-b-[5px] shadow-[0_0_10px_rgba(0,0,0,0.35)]">
    <div className="flex w-[240px] items-center bg-[#00e35b] pl-[5px] text-[#0b5a2b]">
      <svg width="12" height="13" viewBox="0 0 12 13" className="shrink-0">
        <path d="M5 .5L10 6H7.500c0 2.500 1.500 4.500 4 6.500-4.500 0-8-2-8-6.500H0z" fill="#0a5c25" />
      </svg>
      <span className="w-[202px] pt-px text-center text-[11.900px]">You are screen sharing</span>
      <svg width="11" height="12" viewBox="0 0 11 12" className="shrink-0" fill="none">
        <path d="M5.500 0L11 1.800v4C11 9 8.500 11 5.500 12 2.500 11 0 9 0 5.800v-4z" fill="#0a5c25" />
        <path d="M3 5.800l2 2 3.300-3.600" stroke="#00e35b" strokeWidth="1.300" />
      </svg>
    </div>
    <div className="flex flex-1 items-center gap-[6px] bg-[#f60505] pl-[11px] text-[11px] font-semibold text-white">
      <span className="h-2 w-2 rounded-[1px] bg-white" />
      <span>Stop Share</span>
    </div>
  </div>
);

export default function App() {
  return (
    <div className="relative h-[873px] w-[1388px] overflow-hidden border-r-[5px] border-b-2 border-[#75cc26] bg-[#1b2436] pt-[2px] font-['Inter','Liberation_Sans',sans-serif]">
      <MainWindow />
      <Dialog />
      <ShareStrip />
    </div>
  );
}
